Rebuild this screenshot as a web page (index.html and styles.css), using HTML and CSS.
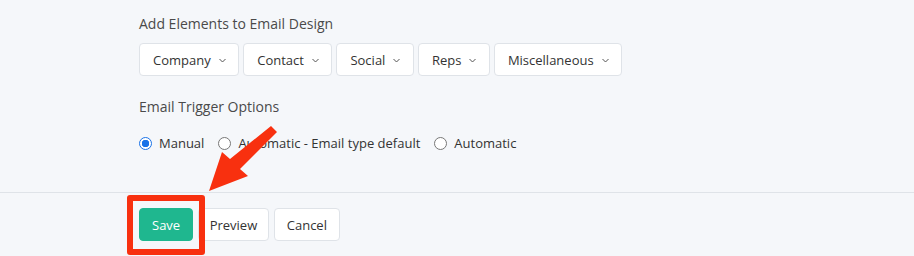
FILE: index.html
```html
<!DOCTYPE html>
<html lang="en">
<head>
    <meta charset="UTF-8">
    <meta name="viewport" content="width=device-width, initial-scale=1.0">
    <title>Email Design</title>
    <link rel="stylesheet" href="styles.css">
</head>
<body>

    <div class="content">
        <div class="label">Add Elements to Email Design</div>
        <div class="dropdowns">
            <button class="btn btn-drop">Company <svg class="chev" width="7" height="5" viewBox="0 0 7 5"><path d="M0.5 1 L3.5 4 L6.5 1" fill="none" stroke="#555" stroke-width="1"/></svg></button>
            <button class="btn btn-drop">Contact <svg class="chev" width="7" height="5" viewBox="0 0 7 5"><path d="M0.5 1 L3.5 4 L6.5 1" fill="none" stroke="#555" stroke-width="1"/></svg></button>
            <button class="btn btn-drop">Social <svg class="chev" width="7" height="5" viewBox="0 0 7 5"><path d="M0.5 1 L3.5 4 L6.5 1" fill="none" stroke="#555" stroke-width="1"/></svg></button>
            <button class="btn btn-drop">Reps <svg class="chev" width="7" height="5" viewBox="0 0 7 5"><path d="M0.5 1 L3.5 4 L6.5 1" fill="none" stroke="#555" stroke-width="1"/></svg></button>
            <button class="btn btn-drop">Miscellaneous <svg class="chev" width="7" height="5" viewBox="0 0 7 5"><path d="M0.5 1 L3.5 4 L6.5 1" fill="none" stroke="#555" stroke-width="1"/></svg></button>
        </div>

        <div class="label trigger-label">Email Trigger Options</div>
        <div class="radios">
            <label class="radio"><span class="dot checked"></span>Manual</label>
            <label class="radio"><span class="dot"></span>Automatic - Email type default</label>
            <label class="radio"><span class="dot"></span>Automatic</label>
        </div>
    </div>

    <div class="footer">
        <button class="btn btn-save">Save</button>
        <button class="btn btn-preview">Preview</button>
        <button class="btn">Cancel</button>
    </div>

    <!-- annotation -->
    <div class="highlight"></div>
    <svg class="arrow" width="914" height="256" viewBox="0 0 914 256">
        <polygon points="271,126 277,132 240,169 248,176 209,191 222,152 230,159" fill="#f8300f"/>
    </svg>

</body>
</html>
```

FILE: styles.css
```css
body {
    margin: 0;
    background-color: #f5f7fa;
    font-family: "Open Sans", Arial, sans-serif;
    font-size: 13px;
    color: #333;
    height: 256px;
    position: relative;
    overflow: hidden;
}
.content {
    padding: 15px 0 0 139px;
    border-bottom: 1px solid #dfe3e8;
    box-sizing: border-box;
    height: 193px;
}
.label {
    font-size: 14px;
    color: #4a4a4a;
    line-height: 18px;
}
.dropdowns {
    display: flex;
    gap: 4px;
    margin-top: 10px;
}
.btn {
    font-family: inherit;
    font-size: 13px;
    color: #333;
    background: #fff;
    border: 1px solid #dfe3e8;
    border-radius: 4px;
    height: 33px;
    padding: 0 12px;
    display: flex;
    align-items: center;
}
.btn-drop {
    padding: 0 12.5px 0 13px;
    gap: 8px;
}
.chev {
    margin-top: 1px;
}
.trigger-label {
    margin-top: 22px;
}
.radios {
    display: flex;
    gap: 14px;
    margin-top: 18px;
}
.radio {
    display: flex;
    align-items: center;
    gap: 7px;
    color: #333;
}
.dot {
    width: 11px;
    height: 11px;
    border: 1px solid #777;
    border-radius: 50%;
    background: #fff;
    box-sizing: content-box;
}
.dot.checked {
    border-color: #1a73e8;
    background: radial-gradient(circle, #1a73e8 0 3.5px, #fff 4px);
}
.footer {
    display: flex;
    gap: 5px;
    padding: 15px 0 0 139px;
}
.btn-save {
    background: #1fb78f;
    border-color: #1fb78f;
    color: #fff;
}
.btn-preview {
    padding: 0 10.5px;
}
.highlight {
    position: absolute;
    left: 127px;
    top: 195px;
    width: 66px;
    height: 48px;
    border: 6px solid #f8300f;
    border-radius: 3px;
}
.arrow {
    position: absolute;
    left: 0;
    top: 0;
}
```
